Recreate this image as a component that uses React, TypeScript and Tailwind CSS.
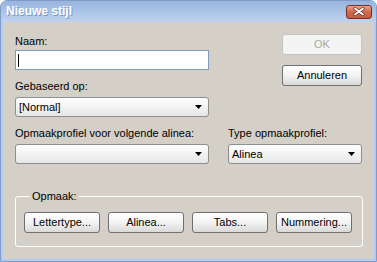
export default function App() {
  return (
    <div className="flex h-[262px] w-[377px] flex-col overflow-hidden rounded-t-[7px] border border-[#7f9bc6] bg-[#b3cbec] font-['Liberation_Sans',Arial,sans-serif] text-[11px] leading-[13px] text-black">
      <TitleBar />
      <div className="mx-[2px] mb-[2px] flex flex-1 flex-col bg-[#d4d0c8] pl-[12px] pr-[11px] pt-[13px]">
        <div className="flex">
          <div className="w-[194px]">
            <div>Naam:</div>
            <div className="mt-[2px] flex h-[20px] items-center border border-[#7f9db9] bg-white pl-[2px]">
              <span className="h-[13px] w-px bg-black" />
            </div>
            <div className="mt-[10px]">Gebaseerd op:</div>
            <Select value="[Normal]" className="mt-[4px]" />
          </div>
          <div className="mr-px ml-auto mt-[-1px] flex w-[80px] flex-col gap-[10px]">
            <Button label="OK" disabled />
            <Button label="Annuleren" />
          </div>
        </div>

        <div className="mt-[10px] flex">
          <div className="w-[194px]">
            <div>Opmaakprofiel voor volgende alinea:</div>
            <Select value="" className="mt-[4px]" />
          </div>
          <div className="ml-[19px] w-[134px]">
            <div>Type opmaakprofiel:</div>
            <Select value="Alinea" className="mt-[4px]" />
          </div>
        </div>

        <fieldset className="mt-[26px] w-[348px] rounded-[3px] border border-white px-[8px] pb-[13px]">
          <legend className="ml-[6px] px-[2px]">Opmaak:</legend>
          <div className="mt-[9px] flex gap-[8px]">
            <Button label="Lettertype..." wide />
            <Button label="Alinea..." wide />
            <Button label="Tabs..." wide />
            <Button label="Nummering..." wide />
          </div>
        </fieldset>
      </div>
    </div>
  );
}

function TitleBar() {
  return (
    <div className="flex h-[21px] shrink-0 items-center bg-gradient-to-b from-[#98b4df] to-[#bdd3ef] pl-[5px] pr-[4px]">
      <span className="text-[12px] font-bold text-white [text-shadow:1px_1px_0_#7d97bf]">Nieuwe stijl</span>
      <button className="ml-auto flex h-[14px] w-[26px] items-center justify-center rounded-[3px] border border-[#7a2e22] bg-gradient-to-b from-[#eaa18f] via-[#d2674f] to-[#c65a43]">
        <svg width="12" height="9" viewBox="0 0 12 9">
          <path d="M2 1.5l8 6M10 1.5l-8 6" stroke="#6b2a1f" strokeWidth="3.2" strokeLinecap="round" />
          <path d="M2 1.5l8 6M10 1.5l-8 6" stroke="#ffffff" strokeWidth="1.8" strokeLinecap="round" />
        </svg>
      </button>
    </div>
  );
}

function Select({ value, className = "" }: { value: string; className?: string }) {
  return (
    <div
      className={`flex h-[20px] items-center rounded-[3px] border border-[#8e8f8f] bg-gradient-to-b from-white to-[#e6e6e6] pl-[3px] pr-[6px] ${className}`}
    >
      <span>{value}</span>
      <svg className="ml-auto" width="7" height="4" viewBox="0 0 7 4">
        <path d="M0 0h7L3.5 4z" fill="#000" />
      </svg>
    </div>
  );
}

function Button({ label, disabled, wide }: { label: string; disabled?: boolean; wide?: boolean }) {
  return (
    <button
      className={`h-[21px] ${wide ? "w-[76px]" : "w-[80px]"} rounded-[3px] border text-[11px] leading-[13px] ${
        disabled
          ? "border-[#c3c3c3] bg-[#f4f4f4] text-[#aca899]"
          : "border-[#707070] bg-gradient-to-b from-white via-[#f3f3f3] to-[#d9d9d9] text-black"
      }`}
    >
      {label}
    </button>
  );
}
